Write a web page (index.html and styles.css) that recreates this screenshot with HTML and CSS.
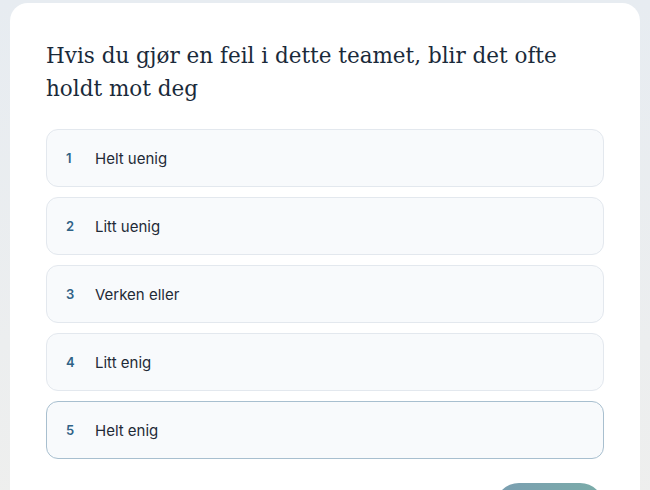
FILE: index.html
```html
<!DOCTYPE html>
<html lang="nb">
<head>
  <meta charset="UTF-8">
  <meta name="viewport" content="width=device-width, initial-scale=1.0">
  <title>Spørsmål</title>
  <link rel="stylesheet" href="styles.css">
</head>
<body>
  <main class="question-card">
    <h1 class="question-title">Hvis du gjør en feil i dette teamet, blir det ofte holdt mot deg</h1>

    <div class="options">
      <button class="option"><span class="option-num">1</span><span class="option-label">Helt uenig</span></button>
      <button class="option"><span class="option-num">2</span><span class="option-label">Litt uenig</span></button>
      <button class="option"><span class="option-num">3</span><span class="option-label">Verken eller</span></button>
      <button class="option"><span class="option-num">4</span><span class="option-label">Litt enig</span></button>
      <button class="option is-focused"><span class="option-num">5</span><span class="option-label">Helt enig</span></button>
    </div>

    <div class="actions">
      <button class="next-btn">Neste</button>
    </div>
  </main>
</body>
</html>
```

FILE: styles.css
```css
:root {
  --text-dark: #1a2a3a;
  --num-blue: #2f6286;
  --option-bg: #f8fafc;
  --option-border: #e3e8ee;
}

* {
  box-sizing: border-box;
  margin: 0;
  padding: 0;
}

body {
  background: linear-gradient(180deg, #e7ecf1 0%, #eceeef 60%, #efefed 100%);
  min-height: 100vh;
  padding: 3px 10px 0;
  overflow: hidden;
  font-family: 'Inter', 'Noto Sans', sans-serif;
}

.question-card {
  background: #fff;
  border-radius: 18px;
  padding: 36px 36px 40px;
  width: 630px;
}

.question-title {
  font-family: 'DejaVu Serif', 'Liberation Serif', serif;
  font-weight: 400;
  font-size: 21.5px;
  line-height: 33px;
  color: var(--text-dark);
  margin-bottom: 24px;
  max-width: 530px;
}

.options {
  display: flex;
  flex-direction: column;
  gap: 10px;
}

.option {
  display: flex;
  align-items: center;
  gap: 20px;
  height: 58px;
  padding: 0 19px;
  background: var(--option-bg);
  border: 1px solid var(--option-border);
  border-radius: 12px;
  font-family: inherit;
  text-align: left;
  cursor: pointer;
}

.option.is-focused {
  border-color: #a8bfcf;
}

.option-num {
  min-width: 9px;
  font-size: 13px;
  font-weight: 600;
  color: var(--num-blue);
}

.option-label {
  font-size: 15px;
  color: #1f2a37;
}

.actions {
  display: flex;
  justify-content: flex-end;
  margin-top: 24px;
}

.next-btn {
  width: 109px;
  height: 50px;
  border: none;
  border-radius: 24px;
  background: linear-gradient(90deg, #7a9eb1, #7aaca8);
  color: #fff;
  font-family: inherit;
  font-size: 15px;
  font-weight: 600;
}
```
